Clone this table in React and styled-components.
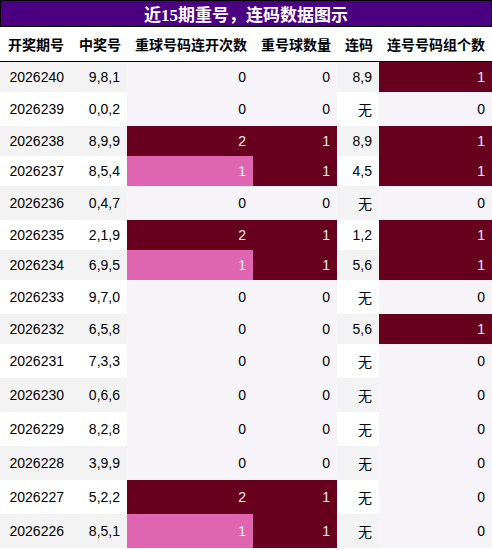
import React from "react";
import styled, { createGlobalStyle } from "styled-components";

const Global = createGlobalStyle`
  html, body { margin: 0; padding: 0; background: #ffffff; }
`;

const Table = styled.table`
  width: 492px;
  border-collapse: collapse;
  table-layout: fixed;
  font-family: "Liberation Sans", "Noto Sans CJK SC", sans-serif;
  font-size: 14px;
  color: #000000;
`;

const Caption = styled.caption`
  background: #4b0082;
  color: #ffffff;
  border: 1px solid #000000;
  font-family: "Liberation Serif", "Noto Sans CJK SC", serif;
  font-weight: bold;
  font-size: 17px;
  text-align: center;
  padding: 0;
`;

const HeadCell = styled.th`
  padding: 7px 7px 7px 8px;
  text-align: right;
  font-weight: bold;
  white-space: nowrap;
  background: #ffffff;
  border-bottom: 1px solid #000000;
`;

const Cell = styled.td`
  padding: 7px 7px 7px 8px;
  text-align: right;
  white-space: nowrap;
  background: ${(p) => p.$bg};
  color: ${(p) => p.$fg || "#000000"};
`;

const rows = [
  ["2026240", "9,8,1", 0, 0, "8,9", 1],
  ["2026239", "0,0,2", 0, 0, "无", 0],
  ["2026238", "8,9,9", 2, 1, "8,9", 1],
  ["2026237", "8,5,4", 1, 1, "4,5", 1],
  ["2026236", "0,4,7", 0, 0, "无", 0],
  ["2026235", "2,1,9", 2, 1, "1,2", 1],
  ["2026234", "6,9,5", 1, 1, "5,6", 1],
  ["2026233", "9,7,0", 0, 0, "无", 0],
  ["2026232", "6,5,8", 0, 0, "5,6", 1],
  ["2026231", "7,3,3", 0, 0, "无", 0],
  ["2026230", "0,6,6", 0, 0, "无", 0],
  ["2026229", "8,2,8", 0, 0, "无", 0],
  ["2026228", "3,9,9", 0, 0, "无", 0],
  ["2026227", "5,2,2", 2, 1, "无", 0],
  ["2026226", "8,5,1", 1, 1, "无", 0],
];

const heat = (v, max) => {
  const t = max ? v / max : 0;
  if (t >= 1) return { bg: "#67001f", fg: "#f1f1f1" };
  if (t > 0) return { bg: "#df65b0", fg: "#f1f1f1" };
  return { bg: "#f7f4f9", fg: "#000000" };
};

const stripe = (i) => (i % 2 === 0 ? "#f3f3f3" : "#ffffff");

const widths = [71, 56, 126, 84, 42, 113];
const headers = ["开奖期号", "中奖号", "重球号码连开次数", "重号球数量", "连码", "连号号码组个数"];

export default function App() {
  const max3 = Math.max(...rows.map((r) => r[2]));
  const max4 = Math.max(...rows.map((r) => r[3]));
  const max6 = Math.max(...rows.map((r) => r[5]));
  return (
    <>
      <Global />
      <Table>
        <Caption>近15期重号，连码数据图示</Caption>
        <colgroup>
          {widths.map((w, i) => (
            <col key={i} style={{ width: w }} />
          ))}
        </colgroup>
        <thead>
          <tr>
            {headers.map((h) => (
              <HeadCell key={h}>{h}</HeadCell>
            ))}
          </tr>
        </thead>
        <tbody>
          {rows.map((r, i) => {
            const c3 = heat(r[2], max3);
            const c4 = heat(r[3], max4);
            const c6 = heat(r[5], max6);
            return (
              <tr key={r[0]}>
                <Cell $bg={stripe(i)}>{r[0]}</Cell>
                <Cell $bg={stripe(i)}>{r[1]}</Cell>
                <Cell $bg={c3.bg} $fg={c3.fg}>{r[2]}</Cell>
                <Cell $bg={c4.bg} $fg={c4.fg}>{r[3]}</Cell>
                <Cell $bg={stripe(i)}>{r[4]}</Cell>
                <Cell $bg={c6.bg} $fg={c6.fg}>{r[5]}</Cell>
              </tr>
            );
          })}
        </tbody>
      </Table>
    </>
  );
}
